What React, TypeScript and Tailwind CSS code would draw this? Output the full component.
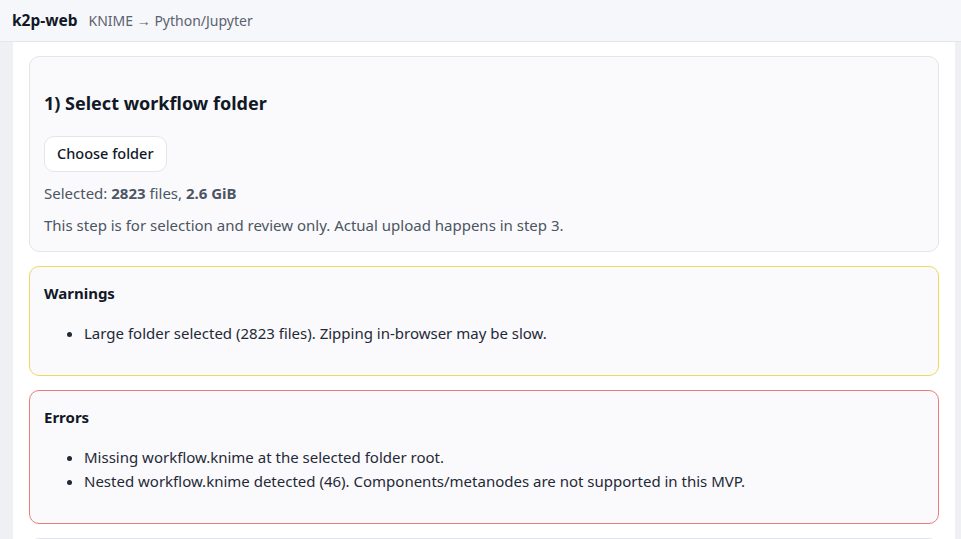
import React from "react";

const Card: React.FC<{ tone?: "plain" | "warn" | "error"; className?: string; children: React.ReactNode }> = ({
  tone = "plain",
  className = "pb-[15px]",
  children,
}) => {
  const border =
    tone === "warn" ? "border-[#efd85f]" : tone === "error" ? "border-[#ec7b7b]" : "border-[#e4e5ea]";
  return <section className={`rounded-[10px] border bg-[#fafafc] px-[14px] pt-[13px] ${className} ${border}`}>{children}</section>;
};

const App: React.FC = () => {
  return (
    <div
      className="h-[539px] overflow-hidden bg-[#eef0f4] text-[15px] text-[#1f2937]"
      style={{ fontFamily: '"Segoe UI", "Noto Sans", "Liberation Sans", sans-serif' }}
    >
      <header className="flex h-[42px] items-center gap-[11px] border-b border-[#e4e6eb] bg-[#f6f7fb] px-3">
        <span className="text-[15.5px] font-bold text-[#111827]">k2p-web</span>
        <span className="text-[14px] text-[#5b6270]">KNIME → Python/Jupyter</span>
      </header>

      <main className="ml-[13px] mr-[6px] flex flex-col gap-[14px] bg-white px-4 pt-[14px] pb-4">
        <Card className="pb-[14px]">
          <h2 className="mt-[19px] text-[18px] font-bold leading-[28px] text-[#111827]">1) Select workflow folder</h2>
          <button className="mt-[19px] h-9 rounded-[10px] border border-[#e4e5ea] bg-white px-[12px] text-[14.5px] font-medium text-[#111827]">
            Choose folder
          </button>
          <p className="mt-[9px] leading-6 text-[#4b5563]">
            Selected: <b className="font-bold">2823</b> files, <b className="font-bold">2.6 GiB</b>
          </p>
          <p className="mt-2 leading-6 text-[#4b5563]">
            This step is for selection and review only. Actual upload happens in step 3.
          </p>
        </Card>

        <Card tone="warn">
          <h3 className="text-[15px] font-bold leading-[26px] text-[#111827]">Warnings</h3>
          <ul className="my-[15px] list-disc pl-[40px] leading-6">
            <li>Large folder selected (2823 files). Zipping in-browser may be slow.</li>
          </ul>
        </Card>

        <Card tone="error">
          <h3 className="text-[15px] font-bold leading-[26px] text-[#111827]">Errors</h3>
          <ul className="my-[15px] list-disc pl-[40px] leading-6">
            <li>Missing workflow.knime at the selected folder root.</li>
            <li>Nested workflow.knime detected (46). Components/metanodes are not supported in this MVP.</li>
          </ul>
        </Card>

        <Card>
          <div className="h-20" />
        </Card>
      </main>
    </div>
  );
};

export default App;
